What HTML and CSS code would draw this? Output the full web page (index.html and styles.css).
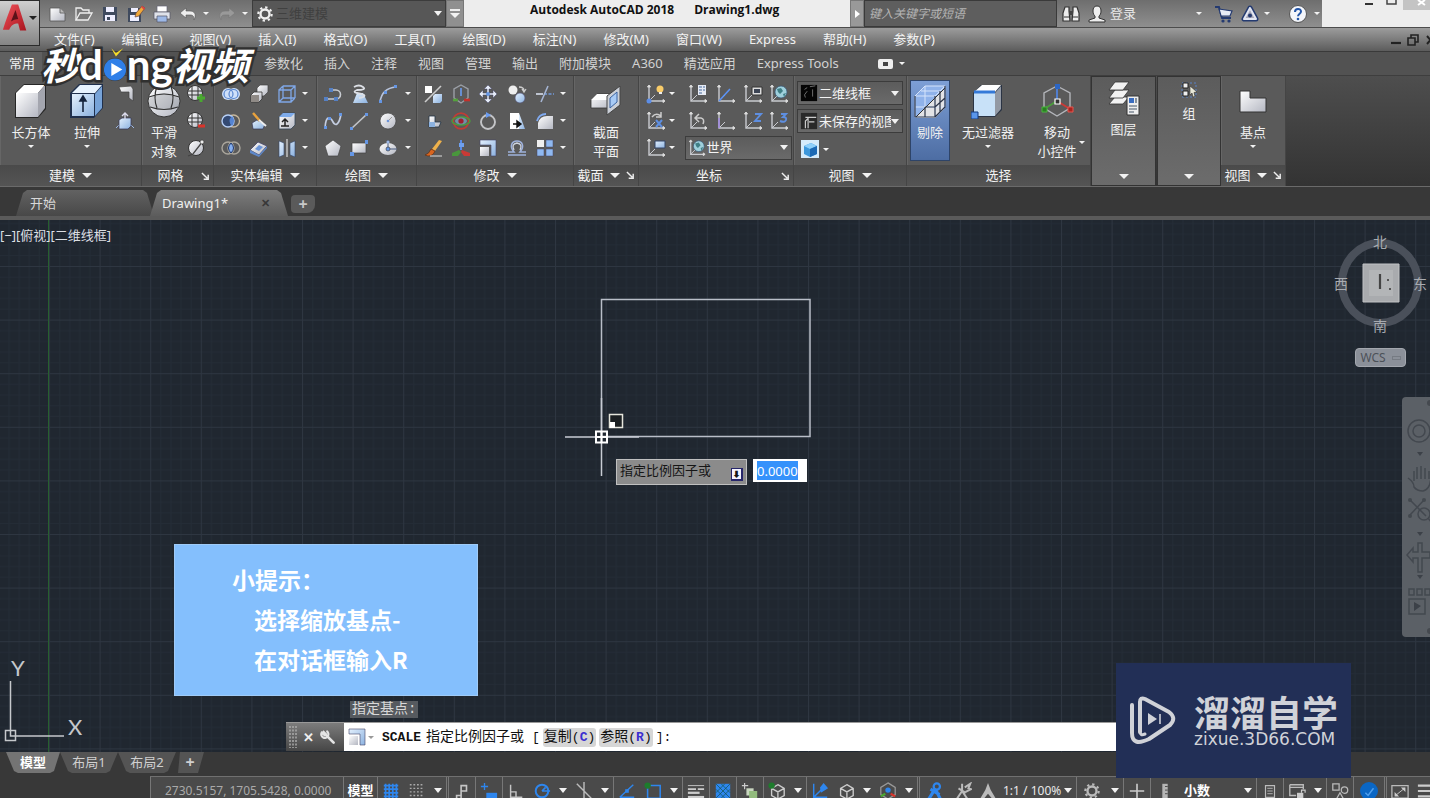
FILE: index.html
```html
<!DOCTYPE html>
<html lang="zh-CN">
<head>
<meta charset="utf-8">
<title>Autodesk AutoCAD 2018 - Drawing1.dwg</title>
<link rel="stylesheet" href="styles.css">
</head>
<body>
<svg class="defs" aria-hidden="true">
<defs>
<linearGradient id="gw" x1="0" y1="0" x2="1" y2="1"><stop offset="0" stop-color="#fff"/><stop offset="1" stop-color="#b4b7c2"/></linearGradient>
<linearGradient id="gb" x1="0" y1="0" x2="1" y2="1"><stop offset="0" stop-color="#e3f0fd"/><stop offset="1" stop-color="#8cb2e0"/></linearGradient>
<linearGradient id="gr" x1="0" y1="0" x2="1" y2="1"><stop offset="0" stop-color="#f0525a"/><stop offset="1" stop-color="#a8141e"/></linearGradient>
</defs>
<symbol id="new" viewBox="0 0 20 20"><path d="M2 4h10l5 5v8H2z" fill="url(#gw)" stroke="#555" stroke-width=".8"/><path d="M12 4v5h5" fill="#bbb" stroke="#555" stroke-width=".8"/></symbol>
<symbol id="open" viewBox="0 0 20 20"><path d="M2 16V4h5l2 2h6v3" fill="#777" stroke="#eee" stroke-width="1.3"/><path d="M2 16l4-7h12l-4 7z" fill="#777" stroke="#eee" stroke-width="1.3"/></symbol>
<symbol id="save" viewBox="0 0 20 20"><path d="M3 3h14v14H3z" fill="#3f4a5e"/><path d="M6 3h8v5H6zM5 11h10v6H5z" fill="#eef"/><path d="M7 13h3v3H7z" fill="#3f4a5e"/></symbol>
<symbol id="saveas" viewBox="0 0 20 20"><path d="M2 4h13v14H2z" fill="#3f4a5e"/><path d="M5 4h7v4H5zM4 11h9v6H4z" fill="#eef"/><path d="M9 13l1-4 6-7 3 2-6 8z" fill="#f0a838" stroke="#644" stroke-width=".7"/><path d="M15 3l1-1 3 2-1 2z" fill="#d44"/></symbol>
<symbol id="print" viewBox="0 0 20 20"><path d="M5 2h10v6H5z" fill="#fff" stroke="#667" stroke-width=".7"/><path d="M2 8h16v7H2z" fill="#dfe2ea" stroke="#556" stroke-width=".7"/><path d="M5 12h10v6H5z" fill="#9db8e6" stroke="#556" stroke-width=".7"/></symbol>
<symbol id="undo" viewBox="0 0 20 20"><path d="M8 4L2 9l6 5v-3h4c3 0 4 1 4 5 3-6 0-9-4-9H8z" fill="#eee" stroke="#555" stroke-width=".6"/></symbol>
<symbol id="redo" viewBox="0 0 20 20"><path d="M12 4l6 5-6 5v-3H8c-3 0-4 1-4 5-3-6 0-9 4-9h4z" fill="#999" stroke="#777" stroke-width=".6"/></symbol>
<symbol id="gear" viewBox="0 0 20 20"><circle cx="10" cy="10" r="5" fill="none" stroke="currentColor" stroke-width="2.6"/><circle cx="10" cy="10" r="7.4" fill="none" stroke="currentColor" stroke-width="2.4" stroke-dasharray="2.6 3.2"/></symbol>
<symbol id="bino" viewBox="0 0 20 20"><path d="M4 3h4v4l1 10H2V9zM12 3h4l2 6v8h-7l1-10z" fill="#eee" stroke="#333" stroke-width="1.2"/><path d="M8 7h4v4H8z" fill="#444"/><path d="M3 13h5M12 13h5" stroke="#333"/></symbol>
<symbol id="user" viewBox="0 0 20 20"><path d="M10 2c3 0 4 2 4 5s-1 4-2 5v2l6 2v2H2v-2l6-2v-2C7 11 6 10 6 7s1-5 4-5z" fill="#eee" stroke="#333"/></symbol>
<symbol id="cart" viewBox="0 0 20 20"><path d="M1 3h4l3 11h9" fill="none" stroke="#243a70" stroke-width="1.8"/><path d="M5 5l13 2-2 5H7z" fill="#e8ecf6" stroke="#243a70" stroke-width="1.2"/><circle cx="9" cy="17" r="1.6" fill="#243a70"/><circle cx="15" cy="17" r="1.6" fill="#243a70"/></symbol>
<symbol id="a360" viewBox="0 0 20 20"><path d="M10 4L4 15h12z" fill="none" stroke="#243a70" stroke-width="5" stroke-linejoin="round"/><path d="M10 4L4 15h12z" fill="#aab" stroke="#e2e6f2" stroke-width="2" stroke-linejoin="round"/><circle cx="10" cy="11.500" r="2" fill="#243a70"/></symbol>
<symbol id="help" viewBox="0 0 20 20"><circle cx="10" cy="10" r="8.5" fill="#f4f6fb" stroke="#555"/><path d="M7 8c0-4 6-4 6-.5 0 2.200-3 2.200-3 4.800" fill="none" stroke="#2456a8" stroke-width="2"/><circle cx="10" cy="15" r="1.3" fill="#2456a8"/></symbol>
<symbol id="cubew" viewBox="0 0 34 36"><path d="M1 10L10 1h22v25l-8 9H1z" fill="#262626"/><path d="M2 10h22v24H2z" fill="url(#gw)"/><path d="M2 10l8-8h21l-7 8z" fill="#fff"/><path d="M24 10l7-8v23l-7 9z" fill="#a4a6af"/></symbol>
<symbol id="extr" viewBox="0 0 34 36"><path d="M0 10L9 1h24v24l-9 10H0z" fill="#20304d"/><path d="M2 11h22v22H2z" fill="url(#gb)"/><path d="M2 10l8-8h22l-7 8z" fill="#e8f3fe"/><path d="M25 11l7-8v22l-7 8z" fill="#77a3d8"/><path d="M13 29V16M10 18l3-5 3 5z" stroke="#16243c" stroke-width="1.600" fill="#16243c"/></symbol>
<symbol id="poly3" viewBox="0 0 20 20"><path d="M4 3l12-1 2 3v12l-4-3V8H6z" fill="url(#gw)" stroke="#444" stroke-width=".7"/></symbol>
<symbol id="press" viewBox="0 0 20 20"><path d="M1 17l3-3h12l3 3" fill="none" stroke="#9db8e6"/><path d="M4 9l3-2h9v8l-3 3H4z" fill="url(#gb)" stroke="#335" stroke-width=".7"/><path d="M10 8V2M7 5l3-3 3 3" fill="none" stroke="#dde" stroke-width="1.3"/></symbol>
<symbol id="sphere" viewBox="0 0 34 36"><circle cx="17" cy="18" r="16" fill="url(#gw)" stroke="#333"/><path d="M2 16q15-12 30 0v8q-15 6-30 0z" fill="#5b5d63" opacity=".2"/><path d="M2 14q15-6 30 0M3 24q14 5 28 0M10 3q-4 12 0 22M24 3q4 12 0 22" fill="none" stroke="#333" stroke-width="1.2"/></symbol>
<symbol id="meshp" viewBox="0 0 20 20"><circle cx="9" cy="9" r="7.500" fill="url(#gw)" stroke="#333"/><path d="M2 7h14M2 11h14M6 2v14M12 2v14" stroke="#333"/><path d="M15 10v8M11 14h8" stroke="#49a830" stroke-width="3"/></symbol>
<symbol id="meshm" viewBox="0 0 20 20"><circle cx="9" cy="9" r="7.500" fill="url(#gw)" stroke="#333"/><path d="M2 7h14M2 11h14M6 2v14M12 2v14" stroke="#333"/><path d="M12 15h7" stroke="#d9342b" stroke-width="3"/></symbol>
<symbol id="meshr" viewBox="0 0 20 20"><circle cx="10" cy="10" r="7.500" fill="url(#gw)" stroke="#333"/><path d="M2 18l5-2 10-13" fill="none" stroke="#444" stroke-width="1.300"/><circle cx="16" cy="4" r="2" fill="#eee" stroke="#333" stroke-width=".6"/></symbol>
<symbol id="union" viewBox="0 0 20 20"><circle cx="7" cy="10" r="6" fill="#cfe0fa"/><circle cx="13" cy="10" r="6" fill="#cfe0fa"/><circle cx="7.500" cy="10" r="4.500" fill="none" stroke="#5684cf" stroke-width="1.200"/><circle cx="12.500" cy="10" r="4.500" fill="none" stroke="#5684cf" stroke-width="1.200"/></symbol>
<symbol id="subt" viewBox="0 0 20 20"><circle cx="12.500" cy="10" r="6" fill="none" stroke="#c7b89d" stroke-width="1.300"/><circle cx="7" cy="10" r="6" fill="#344a73" stroke="#b7d0f8" stroke-width="1.400"/><path d="M11 5q-5 5 0 10 4-5 0-10" fill="#5584d2"/></symbol>
<symbol id="inter" viewBox="0 0 20 20"><circle cx="7" cy="10" r="6" fill="none" stroke="#aaa69d" stroke-width="1.400"/><circle cx="13" cy="10" r="6" fill="none" stroke="#aaa69d" stroke-width="1.400"/><path d="M10 5q-5 5 0 10 5-5 0-10" fill="#86b0f0" stroke="#1d376e"/></symbol>
<symbol id="ext2" viewBox="0 0 20 20"><path d="M8 4l3-3h8v7l-4 4H8z" fill="url(#gw)" stroke="#444" stroke-width=".7"/><path d="M2 11l3-3h8v7l-3 3H2z" fill="url(#gw)" stroke="#333" stroke-width=".8"/><path d="M2 11h8v7H2z" fill="#8f8a86"/></symbol>
<symbol id="slice" viewBox="0 0 20 20"><path d="M3 12l5-3 8 4-2 5H4z" fill="url(#gb)" stroke="#335" stroke-width=".7"/><path d="M4 2l7 8" stroke="#e9a23d" stroke-width="2.400"/><path d="M10 9l7 6" stroke="#eee" stroke-width="2"/></symbol>
<symbol id="thick" viewBox="0 0 20 20"><path d="M1 12l8-8 9 4-8 9z" fill="url(#gw)" stroke="#446" stroke-width=".8"/><path d="M1 12v3l9 4 8-9V8l-8 9z" fill="#5e88ca"/><path d="M6 11l4-4 4 2-4 4z" fill="#6b95d8"/></symbol>
<symbol id="wcube" viewBox="0 0 20 20"><path d="M2 6h12v12H2zM6 2h12v12M2 6l4-4M14 6l4-4M14 18l4-4M6 2v12h12M2 18l4-4" fill="none" stroke="#7fa7e6" stroke-width="1.300"/></symbol>
<symbol id="cface" viewBox="0 0 20 20"><path d="M2 6l4-4h12v12l-4 4H2z" fill="url(#gw)" stroke="#345" stroke-width=".8"/><path d="M2 6l4-4h12l-4 4z" fill="#7eabea"/><path d="M8 15V9M5 11l3-3 3 3M4 15h8" stroke="#222" fill="none" stroke-width="1.500"/></symbol>
<symbol id="sepa" viewBox="0 0 20 20"><path d="M2 3l5 2v12l-5 2zM13 5l5-2v16l-5-2z" fill="url(#gb)" stroke="#346" stroke-width=".6"/><path d="M10 1v18" stroke="#ddd" stroke-width="1.200"/></symbol>
<symbol id="pline" viewBox="0 0 20 20"><path d="M2 15h11a4.500 4.500 0 000-9H8" fill="none" stroke="#c9ccd2" stroke-width="1.600"/><path d="M1 13h4v4H1zM11 13h4v4h-4zM6 4h4v4H6z" fill="#5580c4"/></symbol>
<symbol id="helix" viewBox="0 0 20 20"><path d="M4 19l4-10h6l5 10z" fill="url(#gb)"/><path d="M5 3q5-3 9 0t-6 3q-5 2 0 3t7 2q2 2-5 3" fill="none" stroke="#dcdfe5" stroke-width="1.800"/></symbol>
<symbol id="arc" viewBox="0 0 20 20"><path d="M2 18Q4 4 18 3" fill="none" stroke="#b8c4dc" stroke-width="1.700"/><path d="M1 16h3v3H1zM6 7h3v3H6zM16 1h3v3h-3z" fill="#6596e4"/></symbol>
<symbol id="spline" viewBox="0 0 20 20"><path d="M2 17C3 2 8 7 10 11s6 4 8-8" fill="none" stroke="#c4cde0" stroke-width="1.700"/><path d="M1 15h3v3H1zM5 6h3v3H5zM16 2h3v3h-3z" fill="#6596e4"/></symbol>
<symbol id="line" viewBox="0 0 20 20"><path d="M2 18L18 3" stroke="#c2c4c8" stroke-width="1.700"/><path d="M1 16h3v3H1zM16 2h3v3h-3z" fill="#6596e4"/></symbol>
<symbol id="circ" viewBox="0 0 20 20"><circle cx="10" cy="10" r="8" fill="url(#gw)" stroke="#444" stroke-width=".7"/><path d="M10 10l4-4" stroke="#999"/><circle cx="10" cy="10" r="1.300" fill="#6d94d8"/></symbol>
<symbol id="penta" viewBox="0 0 20 20"><path d="M10 2l8 6-3 10H5L2 8z" fill="url(#gw)" stroke="#444" stroke-width=".7"/></symbol>
<symbol id="rect" viewBox="0 0 20 20"><path d="M3 5h14v10H3z" fill="url(#gw)" stroke="#444" stroke-width=".7"/><path d="M1 14h4v4H1zM16 2h3v4h-3z" fill="#6596e4"/></symbol>
<symbol id="ellip" viewBox="0 0 20 20"><ellipse cx="10" cy="11" rx="8.500" ry="6" fill="url(#gw)"/><path d="M10 2v9h9" fill="none" stroke="#46597d"/><circle cx="10" cy="11" r="2" fill="#6596e4" stroke="#333" stroke-width=".6"/><circle cx="10" cy="4" r="1.600" fill="#9db8e6"/></symbol>
<symbol id="explode" viewBox="0 0 20 20"><path d="M2 18L18 2" stroke="#ccc" stroke-width="1.600"/><path d="M2 2h7v7H2z" fill="#fff"/><path d="M10 12l2-2h7v7l-2 2h-7z" fill="url(#gb)"/></symbol>
<symbol id="giz1" viewBox="0 0 20 20"><path d="M10 1l7 4v9l-7 5-7-5V5z" fill="none" stroke="#9b9fa6" stroke-width="1.400"/><path d="M10 12V4" stroke="#6b9cf0" stroke-width="1.600"/><path d="M2 16h5" stroke="#55a23d" stroke-width="2.600"/><path d="M13 16h6" stroke="#c5302b" stroke-width="2.600"/></symbol>
<symbol id="move" viewBox="0 0 20 20"><path d="M10 1l4 4h-3v4h4V6l4 4-4 4v-3h-4v4h3l-4 4-4-4h3v-4H5v3l-4-4 4-4v3h4V5H6z" fill="#e6ecf8" stroke="#446" stroke-width=".5"/><circle cx="10" cy="10" r="2" fill="#6596e4"/></symbol>
<symbol id="copy" viewBox="0 0 20 20"><circle cx="6" cy="6" r="4.500" fill="#eee"/><circle cx="13" cy="14" r="5" fill="url(#gb)" stroke="#557" stroke-width=".7"/><path d="M12 3q5 0 5 4M15 5l2 3 2-3" fill="none" stroke="#ccc" stroke-width="1.300"/></symbol>
<symbol id="trim" viewBox="0 0 20 20"><path d="M1 10h7" stroke="#cfd6e4" stroke-width="1.700"/><path d="M9 10h10" stroke="#7299d8" stroke-width="1.600" stroke-dasharray="3 1.500"/><path d="M6 18L13 2" stroke="#a7b7d6" stroke-width="1.500"/></symbol>
<symbol id="lshape" viewBox="0 0 20 20"><path d="M6 5h6v6h6l-2 5H6z" fill="url(#gw)" stroke="#234" stroke-width=".8"/><path d="M6 11h6v5H6z" fill="#8cb2e0"/></symbol>
<symbol id="giz2" viewBox="0 0 20 20"><circle cx="10" cy="10" r="7.800" fill="none" stroke="#c13c35" stroke-width="1.800"/><ellipse cx="10" cy="10" rx="9" ry="4" fill="none" stroke="#4b9b3d" stroke-width="1.500"/><ellipse cx="10" cy="10" rx="6" ry="3.500" fill="#7fb5d8" opacity=".6"/><circle cx="10" cy="10" r="2.600" fill="#a01f30"/></symbol>
<symbol id="rot" viewBox="0 0 20 20"><circle cx="10" cy="11" r="7" fill="none" stroke="#c4c5c8" stroke-width="1.900"/><path d="M8 1l5 3-5 3z" fill="#6b9cf0"/></symbol>
<symbol id="mirror" viewBox="0 0 20 20"><path d="M3 2h9v16H3z" fill="#fff"/><path d="M12 2l6 16h-6z" fill="url(#gb)"/><path d="M6 13h7M10 10l4 3-4 3z" stroke="#111" stroke-width="1.400" fill="#111"/></symbol>
<symbol id="fillet" viewBox="0 0 20 20"><path d="M3 18v-6q2-7 9-7h6v13z" fill="url(#gw)"/><path d="M2 10Q4 3 11 3" fill="none" stroke="#80aaf0" stroke-width="1.800"/></symbol>
<symbol id="brush" viewBox="0 0 20 20"><path d="M9 11L16 2l3 1-7 10z" fill="#eeb14b"/><path d="M2 17q4-1 6-6l4 2q-2 5-7 5z" fill="#d8651f" stroke="#5a2a10" stroke-width=".6"/><path d="M7 18h12" stroke="#ddd"/></symbol>
<symbol id="giz3" viewBox="0 0 20 20"><path d="M9 12V2h2v10z" fill="#5b8de8"/><path d="M8 5h5v4H8z" fill="#6fa0ee"/><path d="M8 12l-7 3v3h6l3-4z" fill="#49963c"/><path d="M11 12l8 3v3h-6l-3-4z" fill="#c93a36"/></symbol>
<symbol id="scale" viewBox="0 0 20 20"><path d="M2 2h16v16h-5V7H2z" fill="url(#gb)" stroke="#446" stroke-width=".6"/><path d="M2 9h9v9H2z" fill="url(#gw)"/></symbol>
<symbol id="offset" viewBox="0 0 20 20"><path d="M1 17h18M1 14h6c-5-6-2-11 3-11s8 5 3 11h6" fill="none" stroke="#9fb2dc" stroke-width="1.600"/><path d="M7 12q-3-6 3-7 6 1 3 7" fill="none" stroke="#d0d5df" stroke-width="1.300"/></symbol>
<symbol id="array" viewBox="0 0 20 20"><path d="M2 2h7v7H2z" fill="#eee"/><path d="M11 2h7v7h-7zM2 11h7v7H2zM11 11h7v7h-7z" fill="#8fb8f0" stroke="#446" stroke-width=".5"/></symbol>
<symbol id="section" viewBox="0 0 34 36"><path d="M2 17l6-6h15v14H2z" fill="url(#gw)" stroke="#333" stroke-width=".8"/><path d="M2 17l6-6h15l-5 6z" fill="#fff"/><path d="M18 13L31 3v19L18 32z" fill="#cbd0d8" stroke="#444"/><path d="M21 15l7-6v10l-7 6z" fill="#a8cbf6" stroke="#3b63a0"/></symbol>
<symbol id="ax" viewBox="0 0 20 20"><path d="M3 2v15h15" fill="none" stroke="#c9cbd0" stroke-width="1.400"/><path d="M3 17l6-6" stroke="#c9cbd0"/><path d="M1.500 3L3 1l1.500 2zM17 15.500L19 17l-2 1.500z" fill="#ddd" stroke="#ddd"/></symbol>
<symbol id="ucs1" viewBox="0 0 20 20"><use href="#ax"/><circle cx="14" cy="5" r="3.500" fill="#f9cc69"/><path d="M13 8h3v2h-3z" fill="#eee"/><circle cx="3" cy="17" r="2.500" fill="#5c8ee8"/></symbol>
<symbol id="ucs2" viewBox="0 0 20 20"><use href="#ax"/><path d="M10 1h8v10h-8z" fill="#e6ebf5"/><path d="M11 3h3M11 6h3M11 9h3M15 3h2M15 6h2" stroke="#466a9c" stroke-width="1.200"/></symbol>
<symbol id="ucs3" viewBox="0 0 20 20"><use href="#ax"/><path d="M3 17L14 5" stroke="#5b92f4" stroke-width="1.600"/></symbol>
<symbol id="ucs4" viewBox="0 0 20 20"><use href="#ax"/><path d="M9 3h10v8H9z" fill="#ddd" stroke="#333"/><path d="M11 5h6v4h-6z" fill="#3c4454"/></symbol>
<symbol id="ucs5" viewBox="0 0 20 20"><use href="#ax"/><circle cx="12" cy="8" r="6" fill="#9fd0dc" stroke="#357" stroke-width=".7"/><path d="M8 5l4-1 2 3-3 3-2-2zM14 10l3-1-2 4z" fill="#3f7f86"/></symbol>
<symbol id="ucs6" viewBox="0 0 20 20"><use href="#ax"/><path d="M6 6q4-5 9-1M15 1v5h-5" fill="none" stroke="#ccc" stroke-width="1.500"/><path d="M10 9l6 7M16 9l-6 7" stroke="#5e8ee0" stroke-width="2"/></symbol>
<symbol id="ucs7" viewBox="0 0 20 20"><use href="#ax"/><path d="M8 7h5q4 1 2 6M11 3L7 7l4 4" fill="none" stroke="#ccc" stroke-width="1.500"/></symbol>
<symbol id="ucs8" viewBox="0 0 20 20"><use href="#ax"/><path d="M3 17V7" stroke="#a08ae0" stroke-width="1.600"/></symbol>
<symbol id="ucs9" viewBox="0 0 20 20"><use href="#ax"/><path d="M12 3h6l-6 7h6" fill="none" stroke="#5e8ee0" stroke-width="1.900"/></symbol>
<symbol id="ucs10" viewBox="0 0 20 20"><use href="#ax"/><path d="M12 3h5l-3 3q4 0 3 3t-6 1" fill="none" stroke="#5e8ee0" stroke-width="1.900"/></symbol>
<symbol id="ucs11" viewBox="0 0 20 20"><use href="#ax"/><path d="M9 3h10v7H9z" fill="url(#gb)" stroke="#346"/></symbol>
<symbol id="vs1" viewBox="0 0 20 20"><path d="M1 1h18v18H1z" fill="#050505"/><path d="M5 6l3-2M11 3l6-1M8 8l-3 4 1 3M14 6v8" stroke="#777" fill="none"/></symbol>
<symbol id="vs2" viewBox="0 0 20 20"><path d="M1 1h18v18H1z" fill="#292929"/><path d="M6 18V10l3-3M9 18V6h9M10 11h6M6 6h4" stroke="#ccc" fill="none" stroke-width="1.300"/></symbol>
<symbol id="vcube" viewBox="0 0 20 20"><path d="M1 1h18v18H1z" fill="#d6ebfa"/><path d="M4 7l7-3 6 3v8l-7 3-6-3z" fill="#3d98dc"/><path d="M4 7l7-3 6 3-7 3z" fill="#8fd0fa"/><path d="M10 10l7-3v8l-7 3z" fill="#1c69b4"/></symbol>
<symbol id="cull" viewBox="0 0 34 36"><path d="M2 14L12 3h20v22l-10 10H2z" fill="#8fb2ea"/><path d="M4 33L31 6v20l-9 9H4z" fill="#e2e3e6"/><path d="M2 13h20v21H2zM12 3h20v21M2 13L12 3M22 13l10-10M22 34l10-10M12 3v21h20M2 24h20M8 8h20" fill="none" stroke="#d6e4fb" stroke-width="1"/><path d="M12 24v10M22 13v21h-20M2 34V13M22 24l10-9M27 8v21M32 3v21L22 34M12 24h10" fill="none" stroke="#2b3448" stroke-width="1.200"/><path d="M3 34L32 5" stroke="#333"/></symbol>
<symbol id="nofil" viewBox="0 0 34 36"><path d="M2 10l8-8h21v25l-7 7H2z" fill="#2b3444"/><path d="M3 10h21v23H3z" fill="#c8e1f8"/><path d="M3 9l8-7h19l-6 7z" fill="#fff"/><path d="M24 10l6-7v23l-6 7z" fill="#9399a4"/><path d="M3 9h21" stroke="#3479d8" stroke-width="3"/><path d="M0 29h7v7H0z" fill="#5a96ea" stroke="#123a80"/></symbol>
<symbol id="gizb" viewBox="0 0 34 36"><path d="M17 3l13 7v15l-13 8-13-8V10z" fill="none" stroke="#b3b5ba" stroke-width="1.400"/><path d="M17 18V4" stroke="#4f88ee" stroke-width="1.600"/><path d="M17 18L4 26" stroke="#4b9b3d" stroke-width="2"/><path d="M17 18l13 8" stroke="#c93a36" stroke-width="2"/><path d="M15 1h5v5h-5z" fill="#2c66c4"/><path d="M2 24h5v5H2z" fill="#2a7f22" stroke="#49b53c"/><path d="M28 24h5v5h-5z" fill="#a8241f" stroke="#e4574e"/><path d="M15 16h5v5h-5z" fill="#333" stroke="#fff" stroke-width="1.200"/></symbol>
<symbol id="layers" viewBox="0 0 34 36"><g fill="#f2f2f2" stroke="#333" stroke-width=".8"><path d="M2 24l6-7h14l-6 7z"/><path d="M2 18l6-8h14l-6 8z"/><path d="M2 10l6-8h14l-6 8z"/></g><path d="M20 16h12v19H20z" fill="#eee" stroke="#333"/><path d="M22 18h5v5h-5z" fill="#3a6dc0"/><path d="M29 18v5M22 26h8M22 29h8M22 32h5" stroke="#456" stroke-width="1.200"/></symbol>
<symbol id="group" viewBox="0 0 20 20"><path d="M3 3h14v14H3z" fill="none" stroke="#5a83c8" stroke-dasharray="2 2"/><path d="M4 3h5v5H4zM4 11h5v5H4z" fill="#eee" stroke="#222"/><path d="M11 6l7 6-3 .5 1 4-2 .5-1-4-2 2z" fill="#e8e8d8" stroke="#333" stroke-width=".6"/></symbol>
<symbol id="base" viewBox="0 0 34 36"><path d="M4 8h10v7h16v14H4z" fill="url(#gw)" stroke="#333"/></symbol>
<symbol id="wrench" viewBox="0 0 20 20"><path d="M7 7l10 10" stroke="#e4e4e4" stroke-width="3.400" stroke-linecap="round"/><path d="M3.500 2.500L7 6 5.500 7.500 2 4.500a4.500 4.500 0 106-2" fill="none" stroke="#e4e4e4" stroke-width="2.600"/></symbol>
<symbol id="launch" viewBox="0 0 10 10"><path d="M1 1l6 6M8 3v5H3" fill="none" stroke="#eee" stroke-width="1.600"/></symbol>
<symbol id="sgrid" viewBox="0 0 20 20"><path d="M2 4h16M2 8h16M2 12h16M2 16h16M4 2v16M8 2v16M12 2v16M16 2v16" stroke="#2e86ee" stroke-width="1.900"/></symbol>
<symbol id="sdots" viewBox="0 0 20 20"><path d="M2 3h16M2 7h16M2 11h16M2 15h16" stroke="#aaa" stroke-width="1.500" stroke-dasharray="2 2"/></symbol>
<symbol id="sinfer" viewBox="0 0 20 20"><path d="M9 18V4h6v6H9M4 15h5v5H4z" fill="none" stroke="#c5c5c5" stroke-width="1.800"/></symbol>
<symbol id="sdyn" viewBox="0 0 20 20"><path d="M5 1v8M1 5h8" stroke="#2e86ee" stroke-width="1.500"/><path d="M7 12h12v6H7z" fill="#2e86ee"/></symbol>
<symbol id="sortho" viewBox="0 0 20 20"><path d="M4 3v14h13M4 11h6v6" fill="none" stroke="#c5c5c5" stroke-width="1.600"/></symbol>
<symbol id="spolar" viewBox="0 0 20 20"><circle cx="10" cy="10" r="7" fill="none" stroke="#2e86ee" stroke-width="2.200"/><path d="M10 10l4-4M10 10h9" stroke="#2e86ee" stroke-width="1.900"/></symbol>
<symbol id="siso" viewBox="0 0 20 20"><path d="M2 2l16 16M10 0v20" stroke="#bbb" stroke-width="1.600"/></symbol>
<symbol id="strack" viewBox="0 0 20 20"><path d="M2 17L17 3M2 17h16" stroke="#2e86ee" stroke-width="1.600"/><path d="M8 8h4v4H8z" fill="#2e86ee"/></symbol>
<symbol id="sosnap" viewBox="0 0 20 20"><path d="M4 4h14v14H4z" fill="none" stroke="#2e86ee" stroke-width="1.700"/><circle cx="4" cy="4" r="3.500" fill="#1d7c2c"/></symbol>
<symbol id="slw" viewBox="0 0 20 20"><path d="M1 4h18" stroke="#ccc"/><path d="M1 8h9M12 8h7" stroke="#ccc" stroke-width="2"/><path d="M1 12h13" stroke="#ccc" stroke-width="2.500"/><path d="M1 17h18" stroke="#ccc" stroke-width="3"/></symbol>
<symbol id="strans" viewBox="0 0 20 20"><path d="M2 2h16v16H2z" fill="#2e86ee"/><path d="M2 2l16 16M2 8l10 10M8 2l10 10M18 2L2 18M12 2L2 12M18 8L8 18" stroke="#155" stroke-width=".8"/></symbol>
<symbol id="scyc" viewBox="0 0 20 20"><path d="M4 1v7M1 4h7" stroke="#ccc" stroke-width="1.300"/><path d="M6 7h8v8H6z" fill="#c9d6c0"/><path d="M9 10h9v10H9z" fill="#92bb7d"/></symbol>
<symbol id="s3d" viewBox="0 0 20 20"><path d="M11 3l7 4v8l-7 4-7-4V7zM4 7l7 4 7-4M11 11v8" fill="none" stroke="#ccc" stroke-width="1.500"/></symbol>
<symbol id="s3dg" viewBox="0 0 20 20"><use href="#s3d"/><circle cx="4" cy="4" r="3.500" fill="#1d7c2c"/></symbol>
<symbol id="sducs" viewBox="0 0 20 20"><path d="M3 2v15h15M3 17L14 6" fill="none" stroke="#2e86ee" stroke-width="1.600"/><path d="M14 1l5 6-8 5-1-6z" fill="#2e86ee"/></symbol>
<symbol id="sgiz" viewBox="0 0 20 20"><path d="M10 1l8 5v8l-8 5-8-5V6z" fill="none" stroke="#999" stroke-width="1.400"/><circle cx="10" cy="9" r="3" fill="#2e86ee"/><path d="M7 13l-5 3" stroke="#49a830" stroke-width="2.400"/><path d="M13 13l5 3" stroke="#d9342b" stroke-width="2.400"/></symbol>
<symbol id="sann1" viewBox="0 0 20 20"><circle cx="12" cy="5" r="3.500" fill="none" stroke="#2e86ee" stroke-width="2.500"/><path d="M10 8L3 19M11 9l5 10M5 8l10 6" stroke="#2e86ee" stroke-width="3.500"/></symbol>
<symbol id="sann2" viewBox="0 0 20 20"><path d="M9 2v8l-6 9M9 10l6 9M5 7l8 5M12 6l6-4-2 5 3 1-6 3" fill="none" stroke="#bbb" stroke-width="2.200"/></symbol>
<symbol id="sann3" viewBox="0 0 20 20"><path d="M10 1l3 8 6 10h-4l-5-6-5 6H1L7 9z" fill="#bbb"/></symbol>
<symbol id="splus" viewBox="0 0 20 20"><path d="M10 2v16M2 10h16" stroke="#ccc" stroke-width="1.800"/></symbol>
<symbol id="sunit" viewBox="0 0 20 20"><path d="M7 2h6v18H7z" fill="#b5b5b5"/><path d="M10 5h3M10 9h3M10 13h3" stroke="#444"/></symbol>
<symbol id="squick" viewBox="0 0 20 20"><path d="M5 4h10v13H5z" fill="none" stroke="#bbb" stroke-width="1.300"/><path d="M7 7h6M7 10h6M7 13h6" stroke="#bbb"/></symbol>
<symbol id="slock" viewBox="0 0 20 20"><path d="M2 3h15v5M2 3v12h7M2 6h15" fill="none" stroke="#bbb" stroke-width="1.500"/><path d="M10 12h7v7h-7z" fill="#ccc"/><path d="M15 12V9h4v3" fill="none" stroke="#ccc" stroke-width="1.300"/></symbol>
<symbol id="siso2" viewBox="0 0 20 20"><path d="M2 2h7v7H2zM10 12l4 7H6z" fill="none" stroke="#bbb" stroke-width="1.400"/><circle cx="15" cy="9" r="3.600" fill="none" stroke="#bbb" stroke-width="1.400"/></symbol>
<symbol id="shw" viewBox="0 0 20 20"><circle cx="10" cy="10" r="10" fill="#0a66c4"/><path d="M6 12l3 3 6-8" fill="none" stroke="#4f9fee" stroke-width="1.600"/></symbol>
<symbol id="sclean" viewBox="0 0 20 20"><path d="M1 4h18v14H1z" fill="none" stroke="#bbb" stroke-width="1.400"/><path d="M11 6h5v5zM4 16v-5l5 5z" fill="#ccc"/><path d="M5 15L15 7" stroke="#ccc"/></symbol>
<symbol id="smenu" viewBox="0 0 20 20"><path d="M1 4h18M1 10h18M1 16h18" stroke="#ccc" stroke-width="2.400"/></symbol>
</svg>

<header class="top">
  <button class="app" aria-label="应用程序菜单">
    <svg viewBox="0 0 30 34" width="27" height="32"><path d="M11 2h7l9 29h-7l-2-8c-5 0-8 2-10 7H1C4 20 8 10 11 2z" fill="url(#gr)"/><path d="M15 8l3 10q-5 0-8 3z" fill="#5b1219"/></svg>
    <i class="tri dark"></i>
  </button>
  <div class="titlebar">
    <div class="quick">
      <button aria-label="新建"><svg class="i"><use href="#new"/></svg></button>
      <button aria-label="打开"><svg class="i"><use href="#open"/></svg></button>
      <button aria-label="保存"><svg class="i"><use href="#save"/></svg></button>
      <button aria-label="另存为"><svg class="i"><use href="#saveas"/></svg></button>
      <button aria-label="打印"><svg class="i"><use href="#print"/></svg></button>
      <button aria-label="放弃"><svg class="i"><use href="#undo"/></svg><i class="tri s"></i></button>
      <button aria-label="重做"><svg class="i"><use href="#redo"/></svg><i class="tri s"></i></button>
    </div>
    <label class="workspace"><svg class="i"><use href="#gear"/></svg><select aria-label="工作空间"><option>三维建模</option></select><i class="tri"></i></label>
    <button class="qmore" aria-label="自定义"><b></b><i class="tri"></i></button>
    <h1 class="title"><span>Autodesk AutoCAD 2018</span><span>Drawing1.dwg</span></h1>
    <div class="info">
      <button class="sarrow" aria-label="展开"><i class="right"></i></button>
      <input class="search" type="text" placeholder="键入关键字或短语" aria-label="搜索">
      <button aria-label="查找"><svg class="i"><use href="#bino"/></svg></button>
      <button class="login"><svg class="i"><use href="#user"/></svg><span>登录</span><i class="tri s"></i></button>
      <button aria-label="商店"><svg class="i"><use href="#cart"/></svg></button>
      <button class="a360" aria-label="A360"><svg class="i"><use href="#a360"/></svg><i class="tri s"></i></button>
      <button class="hlp" aria-label="帮助"><svg class="i"><use href="#help"/></svg><i class="tri s"></i></button>
    </div>
    <div class="wctl">
      <svg viewBox="0 0 108 26"><path d="M43 4h8" stroke="#333" stroke-width="2"/><path d="M65 0v4h9V0" fill="none" stroke="#444" stroke-width="1.500"/><path d="M81 0h27v10H81z" fill="#c4c4c4"/><path d="M96 0l7 5M103 0l-7 5" stroke="#fff" stroke-width="2"/></svg>
    </div>
  </div>
  <nav class="menubar">
    <a href="#">文件(F)</a><a href="#">编辑(E)</a><a href="#">视图(V)</a><a href="#">插入(I)</a><a href="#">格式(O)</a><a href="#">工具(T)</a><a href="#">绘图(D)</a><a href="#">标注(N)</a><a href="#">修改(M)</a><a href="#">窗口(W)</a><a href="#">Express</a><a href="#">帮助(H)</a><a href="#">参数(P)</a>
    <svg class="mdi" viewBox="0 0 44 16"><path d="M5 11h10" stroke="#222" stroke-width="2.200"/><path d="M22 6h7v7h-7zM25 6V3h7v7h-3" fill="none" stroke="#222" stroke-width="1.600"/><path d="M41 4l7 8M48 4l-7 8" stroke="#222" stroke-width="2"/></svg>
  </nav>
</header>

<nav class="rtabs">
  <a class="on" href="#">常用</a>
  <div class="more"><a href="#">参数化</a><a href="#">插入</a><a href="#">注释</a><a href="#">视图</a><a href="#">管理</a><a href="#">输出</a><a href="#">附加模块</a><a href="#">A360</a><a href="#">精选应用</a><a href="#">Express Tools</a></div>
  <button class="rmin" aria-label="最小化功能区"><b></b><i class="tri s"></i></button>
</nav>

<main class="ribbon">
  <section class="panel p1">
    <div class="body">
      <button class="big"><svg><use href="#cubew"/></svg><span>长方体</span><i class="tri s"></i></button>
      <button class="big"><svg><use href="#extr"/></svg><span>拉伸</span><i class="tri s"></i></button>
      <div class="col"><button aria-label="多段体"><svg class="i"><use href="#poly3"/></svg></button><button aria-label="按住并拖动"><svg class="i"><use href="#press"/></svg></button></div>
    </div>
    <h2>建模<i class="tri"></i></h2>
  </section>
  <section class="panel p2">
    <div class="body">
      <button class="big"><svg><use href="#sphere"/></svg><span>平滑<br>对象</span></button>
      <div class="col"><button aria-label="提高平滑度"><svg class="i"><use href="#meshp"/></svg></button><button aria-label="降低平滑度"><svg class="i"><use href="#meshm"/></svg></button><button aria-label="优化网格"><svg class="i"><use href="#meshr"/></svg></button></div>
    </div>
    <h2>网格<svg class="la"><use href="#launch"/></svg></h2>
  </section>
  <section class="panel p3">
    <div class="body icons">
      <button aria-label="并集"><svg class="i"><use href="#union"/></svg></button><button aria-label="拉伸面"><svg class="i"><use href="#ext2"/></svg></button><button aria-label="提取边"><svg class="i"><use href="#wcube"/></svg></button><i class="tri s"></i>
      <button aria-label="差集"><svg class="i"><use href="#subt"/></svg></button><button aria-label="剖切"><svg class="i"><use href="#slice"/></svg></button><button aria-label="偏移面"><svg class="i"><use href="#cface"/></svg></button><i class="tri s"></i>
      <button aria-label="交集"><svg class="i"><use href="#inter"/></svg></button><button aria-label="加厚"><svg class="i"><use href="#thick"/></svg></button><button aria-label="分割"><svg class="i"><use href="#sepa"/></svg></button><i class="tri s"></i>
    </div>
    <h2>实体编辑<i class="tri"></i></h2>
  </section>
  <section class="panel p4">
    <div class="body icons">
      <button aria-label="多段线"><svg class="i"><use href="#pline"/></svg></button><button aria-label="螺旋"><svg class="i"><use href="#helix"/></svg></button><button aria-label="圆弧"><svg class="i"><use href="#arc"/></svg></button><i class="tri s"></i>
      <button aria-label="样条曲线"><svg class="i"><use href="#spline"/></svg></button><button aria-label="直线"><svg class="i"><use href="#line"/></svg></button><button aria-label="圆"><svg class="i"><use href="#circ"/></svg></button><i class="tri s"></i>
      <button aria-label="多边形"><svg class="i"><use href="#penta"/></svg></button><button aria-label="矩形"><svg class="i"><use href="#rect"/></svg></button><button aria-label="椭圆"><svg class="i"><use href="#ellip"/></svg></button><i class="tri s"></i>
    </div>
    <h2>绘图<i class="tri"></i></h2>
  </section>
  <section class="panel p5">
    <div class="body icons">
      <button aria-label="分解"><svg class="i"><use href="#explode"/></svg></button><button aria-label="三维移动"><svg class="i"><use href="#giz1"/></svg></button><button aria-label="移动"><svg class="i"><use href="#move"/></svg></button><button aria-label="复制"><svg class="i"><use href="#copy"/></svg></button><button aria-label="修剪"><svg class="i"><use href="#trim"/></svg></button><i class="tri s"></i>
      <button aria-label="对齐"><svg class="i"><use href="#lshape"/></svg></button><button aria-label="三维旋转"><svg class="i"><use href="#giz2"/></svg></button><button aria-label="旋转"><svg class="i"><use href="#rot"/></svg></button><button aria-label="镜像"><svg class="i"><use href="#mirror"/></svg></button><button aria-label="圆角"><svg class="i"><use href="#fillet"/></svg></button><i class="tri s"></i>
      <button aria-label="删除"><svg class="i"><use href="#brush"/></svg></button><button aria-label="三维缩放"><svg class="i"><use href="#giz3"/></svg></button><button aria-label="缩放"><svg class="i"><use href="#scale"/></svg></button><button aria-label="偏移"><svg class="i"><use href="#offset"/></svg></button><button aria-label="阵列"><svg class="i"><use href="#array"/></svg></button><i class="tri s"></i>
    </div>
    <h2>修改<i class="tri"></i></h2>
  </section>
  <section class="panel p6">
    <div class="body"><button class="big"><svg><use href="#section"/></svg><span>截面<br>平面</span></button></div>
    <h2>截面<i class="tri"></i><svg class="la"><use href="#launch"/></svg></h2>
  </section>
  <section class="panel p7">
    <div class="body icons">
      <button aria-label="UCS 图标"><svg class="i"><use href="#ucs1"/></svg></button><i class="tri s"></i><button class="c4" aria-label="UCS 设置"><svg class="i"><use href="#ucs2"/></svg></button><button aria-label="UCS"><svg class="i"><use href="#ucs3"/></svg></button><button aria-label="命名 UCS"><svg class="i"><use href="#ucs4"/></svg></button><button aria-label="世界 UCS"><svg class="i"><use href="#ucs5"/></svg></button>
      <button aria-label="绕 X 轴"><svg class="i"><use href="#ucs6"/></svg></button><i class="tri s"></i><button class="c4" aria-label="上一个 UCS"><svg class="i"><use href="#ucs7"/></svg></button><button aria-label="原点"><svg class="i"><use href="#ucs8"/></svg></button><button aria-label="Z 轴矢量"><svg class="i"><use href="#ucs9"/></svg></button><button aria-label="三点"><svg class="i"><use href="#ucs10"/></svg></button>
      <button aria-label="视图 UCS"><svg class="i"><use href="#ucs11"/></svg></button><i class="tri s"></i><label class="combo c4w"><svg class="i"><use href="#ucs5"/></svg><select aria-label="坐标系"><option>世界</option></select><i class="tri"></i></label>
    </div>
    <h2>坐标<svg class="la"><use href="#launch"/></svg></h2>
  </section>
  <section class="panel p8">
    <div class="body">
      <label class="combo"><svg class="i"><use href="#vs1"/></svg><select aria-label="视觉样式"><option>二维线框</option></select><i class="tri"></i></label>
      <label class="combo"><svg class="i"><use href="#vs2"/></svg><select aria-label="视图"><option>未保存的视图</option></select><i class="tri"></i></label>
      <button class="vc" aria-label="视口"><svg class="i"><use href="#vcube"/></svg><i class="tri s"></i></button>
    </div>
    <h2>视图<i class="tri"></i></h2>
  </section>
  <section class="panel p9">
    <div class="body">
      <button class="big sel"><svg><use href="#cull"/></svg><span>剔除</span></button>
      <button class="big"><svg><use href="#nofil"/></svg><span>无过滤器</span><i class="tri s"></i></button>
      <button class="big giz"><svg><use href="#gizb"/></svg><span>移动<br>小控件</span><i class="tri s"></i></button>
    </div>
    <h2>选择</h2>
  </section>
  <section class="panel raised p10"><button class="big"><svg><use href="#layers"/></svg><span>图层</span></button><i class="tri"></i></section>
  <section class="panel raised p11"><button class="big"><svg class="i"><use href="#group"/></svg><span>组</span></button><i class="tri"></i></section>
  <section class="panel p12">
    <div class="body"><button class="big"><svg><use href="#base"/></svg><span>基点</span><i class="tri s"></i></button></div>
    <h2>视图<i class="tri"></i><svg class="la"><use href="#launch"/></svg></h2>
  </section>
</main>

<nav class="ftabs">
  <a class="ftab" href="#">开始</a>
  <a class="ftab on" href="#">Drawing1*<b>✕</b></a>
  <button class="fplus" aria-label="新图形">+</button>
</nav>

<section class="canvas">
  <svg class="grid" width="100%" height="100%">
    <defs><pattern id="pg" x="245" y="230" width="253" height="268" patternUnits="userSpaceOnUse" patternTransform="scale(.2)">
      <path d="M53 0v268M104 0v268M154 0v268M205 0v268M0 56h253M0 109h253M0 163h253M0 216h253" stroke="#242c36" stroke-width="5"/>
      <path d="M2 0v268M0 2h253" stroke="#2e3641" stroke-width="6"/></pattern></defs>
    <rect width="100%" height="100%" fill="url(#pg)"/>
    <rect x="48" width="1" height="100%" fill="#27602f"/>
    <path d="M601.500 79.500H810V216.500H601.500z" fill="none" stroke="#b9bec8" stroke-width="1.500"/>
    <path d="M565 217h74M601.500 178v78" stroke="#c8ccd4" stroke-width="1.500"/>
    <path d="M596 211.500h11v11h-11zM601.500 211v12M596 217h12" fill="none" stroke="#fff" stroke-width="2"/>
    <rect x="609.500" y="194.500" width="13" height="13" fill="#1b1f22" stroke="#e5e5dc" stroke-width="1.500"/><rect x="610" y="202" width="5" height="6" fill="#fff"/>
  </svg>
  <svg class="ucs" width="90" height="104" viewBox="0 -12 90 104"><path d="M10.500 21v55H64M5.500 70.500h10v10h-10z" fill="none" stroke="#c5c8cc" stroke-width="1.500"/><text x="11" y="16">Y</text><text x="68" y="75">X</text></svg>
  <div class="vlabel">[−][俯视][二维线框]</div>
  <div class="cube">
    <svg viewBox="0 0 110 140" width="110" height="140"><ellipse cx="60" cy="63" rx="38" ry="40" fill="none" stroke="#4a505a" stroke-width="8"/><path d="M43 44h36v38H43z" fill="#a9abae" stroke="#c0c2c4"/><path d="M49 50h24v26H49z" fill="#b3b5b7"/><path d="M60 54v15" stroke="#444" stroke-width="2.200"/><path d="M67 60h2M69 69h2" stroke="#555" stroke-width="2"/></svg>
    <span class="n">北</span><span class="s">南</span><span class="w">西</span><span class="e">东</span>
    <button class="wcs">WCS<b></b></button>
  </div>
  <svg class="navbar" viewBox="0 0 28 240" width="28" height="240"><path d="M28 0H4Q0 0 0 4v232q0 4 4 4h24z" fill="#5b6066"/><g fill="none" stroke="#43484f" stroke-width="1.500"><circle cx="17" cy="34" r="11"/><circle cx="17" cy="34" r="6"/><path d="M6 81q6 4 6 9 3 4 9 4 8-2 8-16M12 84V74M15 82V70M19 82V69M23 82V71M27 82v-8M8 103l16 16M22 103L8 118"/><path d="M16 146h4v9h8v6h-8v14h-4v-14h-5v4l-6-7 6-7v4h5z"/><circle cx="22" cy="117" r="6"/><path d="M26 121l4 5M7 192h5v6H7zM15 192h5v6h-5zM23 192h5v6h-5zM7 202h16v15H7z"/></g><path d="M12 205l7 4-7 5zM15 55h6l-3 4zM15 135h6l-3 4zM15 178h6l-3 4z" fill="#3c4148"/><circle cx="8" cy="103" r="2" fill="#43484f"/><circle cx="22" cy="103" r="2" fill="#43484f"/><circle cx="8" cy="119" r="2" fill="#43484f"/><circle cx="28" cy="6" r="3" fill="#45494f"/><circle cx="28" cy="234" r="3" fill="#45494f"/></svg>
  <div class="dyn">
    <label for="factor">指定比例因子或<b>⬇</b></label>
    <input id="factor" type="text" value="0.0000">
  </div>
  <aside class="tip"><p>小提示：</p><p class="in">选择缩放基点-</p><p class="in">在对话框输入R</p></aside>
  <div class="hist">指定基点:</div>
  <div class="cmd">
    <div class="grip"><svg viewBox="0 0 8 22" width="8" height="22"><path d="M1 0v22M4 0v22M7 0v22" stroke="#aaa" stroke-width="1.500" stroke-dasharray="2 1.500"/></svg><button aria-label="关闭">✕</button><button aria-label="自定义"><svg class="i"><use href="#wrench"/></svg></button></div>
    <svg class="i sc"><use href="#scale"/></svg><i class="tri s gray"></i>
    <p><strong>SCALE</strong><span class="zh">指定比例因子或</span><span class="opts">[<button><span class="zh">复制</span>(<em>C</em>)</button><button><span class="zh">参照</span>(<em>R</em>)</button>]:</span></p>
  </div>
</section>

<nav class="ltabs"><a class="on" href="#">模型</a><a href="#">布局1</a><a href="#">布局2</a><button aria-label="新建布局">+</button></nav>

<footer class="status">
  <div class="g coord">2730.5157, 1705.5428, 0.0000</div>
  <div class="g"><button class="mdl">模型</button></div>
  <div class="g dbl"><button aria-label="栅格"><svg class="i"><use href="#sgrid"/></svg></button><button aria-label="捕捉"><svg class="i"><use href="#sdots"/></svg></button><i class="tri"></i></div>
  <div class="g"><button aria-label="推断约束"><svg class="i"><use href="#sinfer"/></svg></button></div>
  <div class="g"><button aria-label="动态输入"><svg class="i"><use href="#sdyn"/></svg></button></div>
  <div class="g"><button aria-label="正交"><svg class="i"><use href="#sortho"/></svg></button><button aria-label="极轴"><svg class="i"><use href="#spolar"/></svg></button><i class="tri"></i><button aria-label="等轴测"><svg class="i"><use href="#siso"/></svg></button><i class="tri"></i></div>
  <div class="g"><button aria-label="对象追踪"><svg class="i"><use href="#strack"/></svg></button><button aria-label="对象捕捉"><svg class="i"><use href="#sosnap"/></svg></button><i class="tri"></i></div>
  <div class="g"><button aria-label="线宽"><svg class="i"><use href="#slw"/></svg></button></div>
  <div class="g"><button aria-label="透明度"><svg class="i"><use href="#strans"/></svg></button></div>
  <div class="g"><button aria-label="选择循环"><svg class="i"><use href="#scyc"/></svg></button></div>
  <div class="g"><button aria-label="三维捕捉"><svg class="i"><use href="#s3dg"/></svg></button><i class="tri"></i></div>
  <div class="g dbl"><button aria-label="动态 UCS"><svg class="i"><use href="#sducs"/></svg></button><button aria-label="选择过滤"><svg class="i"><use href="#s3d"/></svg></button><i class="tri"></i><button aria-label="小控件"><svg class="i"><use href="#sgiz"/></svg></button><i class="tri"></i></div>
  <div class="g"><button class="w30" aria-label="注释可见性"><svg class="i"><use href="#sann1"/></svg></button><button aria-label="自动缩放"><svg class="i"><use href="#sann2"/></svg></button><button class="ratio"><svg class="i"><use href="#sann3"/></svg><span>1:1 / 100%</span></button><i class="tri"></i></div>
  <div class="g"><button class="gr w30" aria-label="切换工作空间"><svg class="i"><use href="#gear"/></svg></button><i class="tri"></i></div>
  <div class="g"><button aria-label="注释监视器"><svg class="i"><use href="#splus"/></svg></button></div>
  <div class="g unit"><svg class="i"><use href="#sunit"/></svg><select aria-label="单位"><option>小数</option></select><i class="tri"></i></div>
  <div class="g"><button aria-label="快捷特性"><svg class="i"><use href="#squick"/></svg></button></div>
  <div class="g"><button aria-label="锁定界面"><svg class="i"><use href="#slock"/></svg></button><i class="tri"></i></div>
  <div class="g"><button aria-label="隔离对象"><svg class="i"><use href="#siso2"/></svg></button></div>
  <div class="g dbl"><button class="w30" aria-label="硬件加速"><svg class="i"><use href="#shw"/></svg></button></div>
  <div class="g last"><button aria-label="全屏显示"><svg class="i"><use href="#sclean"/></svg></button><button aria-label="自定义"><svg class="i"><use href="#smenu"/></svg></button></div>
</footer>

<div class="brand"><span class="cj">秒</span><span>d</span><svg viewBox="0 0 26 40" width="24" height="40"><circle cx="13" cy="26" r="12" fill="#2f7fe8" stroke="#333" stroke-width="1"/><path d="M9 19l12 7-12 7z" fill="#fff"/><path d="M9 3l5 5 8-5-8 9z" fill="#f6dc28"/></svg><span>ng</span><span class="cj">视频</span></div>

<div class="mark">
  <svg viewBox="0 0 48 52" width="48" height="52"><g fill="none" stroke="#d0d2d8" stroke-width="4" stroke-linecap="round" stroke-linejoin="round"><path d="M11 37V7q0-5 5-3l24 13q8 6 1 13L20 44Q3 52 3 38V10"/><path d="M11 37q0 4 5 2" stroke-width="3"/></g><path d="M19 18l9 6-9 6z" fill="#d0d2d8"/><path d="M31 19v10" stroke="#d0d2d8" stroke-width="1.600"/></svg>
  <div><strong>溜溜自学</strong><span>zixue.3D66.COM</span></div>
</div>
</body>
</html>
```
FILE: styles.css
```css
* { box-sizing: border-box; }
html, body { height: 100%; }
body {
  margin: 0;
  display: flex;
  flex-direction: column;
  overflow: hidden;
  position: relative;
  background: #383838;
  color: #e8e8e8;
  font: 13px/19px "Noto Sans", "Noto Sans CJK SC", sans-serif;
}
.defs { position: absolute; width: 0; height: 0; }
button, select, input { font: inherit; color: inherit; background: none; border: 0; padding: 0; margin: 0; border-radius: 0; }
select { appearance: none; outline: 0; }
button { display: flex; align-items: center; justify-content: center; flex: none; }
a { color: inherit; text-decoration: none; white-space: nowrap; }
h1, h2 { margin: 0; font-size: inherit; font-weight: normal; }
p { margin: 0; }
.i { width: 20px; height: 20px; flex: none; }
.tri { flex: none; width: 0; height: 0; border: 5px solid transparent; border-top-color: #f2f2f2; border-bottom: 0; }
.tri.s { border-width: 3px; border-bottom: 0; }
.tri.dark { border-width: 4px; border-top-color: #222; border-bottom: 0; }
.tri.gray { border-top-color: #999; }

.top { position: relative; flex: none; background: #444; }
.app {
  position: absolute; left: 0; top: 0; width: 40px; height: 46px;
  padding-bottom: 10px;
  background: linear-gradient(#cfcfcf, #858585);
  border: 1px solid #2b2b2b; border-left: 0;
}
.titlebar { display: flex; height: 28px; background: linear-gradient(#6e6e6e, #8f8f8f); border-bottom: 1px solid #4c4c4c; }
.quick { display: flex; width: 252px; padding-left: 48px; gap: 6px; align-items: center; }
.quick .tri { margin-left: 5px; }
.quick button:nth-child(n+6) { margin-right: 2px; }
.workspace { display: flex; align-items: center; width: 194px; padding: 0 3px; background: #575757; border: 1px solid #3c3c3c; color: #f0f0f0; }
.workspace .i { width: 18px; height: 18px; }
.workspace .tri, .combo .tri { border-width: 4px; border-top-width: 5px; border-bottom: 0; }
.workspace select { flex: 1; padding-left: 2px; color: #404040; }
.qmore { flex-direction: column; gap: 2px; width: 18px; background: #909090; border: 1px solid #777; }
.qmore b { width: 10px; height: 2px; background: #eee; }
.title { flex: 1; display: flex; gap: 20px; padding-left: 66px; background: #ededed; color: #111; font-weight: bold; white-space: nowrap; overflow: hidden; font-family: "Open Sans", "Noto Sans", sans-serif; font-size: 12px; }
.info { display: flex; align-items: stretch; width: 472px; }
.info > button { padding: 0 4px; }
.info > .sarrow { width: 14px; padding: 0; background: #999; border: 1px solid #777; }
.right { border: 4px solid transparent; border-left: 5px solid #fff; border-right: 0; }
.search { width: 193px; padding: 0 4px; background: #5e5e5e; border: 1px solid #3a3a3a; font-style: italic; font-size: 12px; }
.search::placeholder { color: #b5b5b5; opacity: 1; }
.info > .login { flex: 1; justify-content: flex-start; gap: 3px; padding: 0 8px 0 2px; }
.login .tri { margin-left: auto; }
.info > .a360 { gap: 4px; padding: 0 8px 0 2px; }
.info > .hlp { gap: 6px; padding: 0 0 0 10px; margin-right: 2px; }
.wctl { width: 108px; background: #ededed; }
.wctl svg { display: block; width: 108px; height: 26px; }
.menubar { display: flex; align-items: center; gap: 27px; height: 24px; padding-left: 54px; background: linear-gradient(#9c9c9c, #5c5c5c); border-bottom: 1px solid #3a3a3a; color: #f2f2f2; }
.mdi { width: 44px; height: 16px; margin-left: auto; }

.rtabs { display: flex; align-items: center; flex: none; height: 24px; background: #525252; border-bottom: 1px solid #3e3e3e; color: #d2d2d2; }
.rtabs .on { width: 42px; padding-left: 9px; line-height: 23px; color: #f2f2f2; background: #606060; }
.more { display: flex; gap: 21px; margin-left: 222px; }
.rmin { margin-left: 39px; gap: 6px; }
.rmin b { width: 15px; height: 10px; border: 3px solid #eee; border-width: 3px 5px; border-radius: 2px; background: #444; }

.ribbon { display: flex; flex: none; height: 111px; background: linear-gradient(#4e4e4e, #333); border-bottom: 1px solid #6a6a6a; }
.panel { display: flex; flex-direction: column; flex: none; background: #5a5a5a; border-right: 1px solid #454545; box-shadow: inset 1px 0 #666; }
.panel .body { display: flex; height: 89px; padding-top: 4px; }
.panel h2 { display: flex; align-items: center; justify-content: center; gap: 7px; height: 21px; background: linear-gradient(#4a4a4a, #545454); color: #f2f2f2; }
.la { width: 9px; height: 9px; }
.panel.p2 h2, .panel.p7 h2 { position: relative; padding-right: 14px; }
.p2 .la, .p7 .la { position: absolute; right: 3px; top: 7px; }
.big { flex-direction: column; justify-content: flex-start; width: 56px; padding-top: 3px; color: #f0f0f0; white-space: nowrap; }
.big > svg { width: 34px; height: 36px; flex: none; }
.big > span { margin-top: 4px; }
.big > .tri { margin-top: 3px; }
.col { display: flex; flex-direction: column; }
.col button, .icons button { height: 27px; }
.icons.body { display: grid; grid-auto-rows: 27px; align-items: center; justify-items: center; justify-content: start; }
.p1 { width: 142px; } .p1 .body { padding-left: 3px; }
.p2 { width: 72px; } .p2 .big { width: 44px; }
.p3 { width: 103px; } .p3 .icons { grid-template-columns: 28px 28px 27px 10px; padding-left: 3px; }
.p4 { width: 100px; } .p4 .icons { grid-template-columns: 28px 24px 34px 6px; padding-left: 2px; }
.p5 { width: 157px; } .p5 .icons { grid-template-columns: 28px 28px 26px 32px 24px 12px; padding-left: 2px; }
.p6 { width: 65px; } .p6 .big { width: 64px; } .p6 h2 { gap: 6px; }
.p7 { width: 155px; } .p7 .icons { grid-template-columns: 24px 8px 8px 27px 29px 26px 26px; padding-left: 5px; }
.c4 { grid-column: 4; }
.c4w { grid-column: 4 / 8; width: 107px; }
.combo { display: flex; align-items: center; height: 24px; padding: 0 3px 0 2px; background: linear-gradient(#5c5c5c, #6a6a6a); border: 1px solid #3c3c3c; color: #f4f4f4; }
.combo select { flex: 1; min-width: 0; padding-left: 1px; overflow: hidden; }
.combo .i { width: 18px; height: 18px; }
.p8 { width: 113px; } .panel.p8 .body { flex-direction: column; gap: 4px; padding: 5px 3px 0; }
.vc { align-self: flex-start; padding: 2px 3px; gap: 3px; }
.p9 { width: 184px; } .p9 .body { padding-left: 3px; }
.p9 .big { width: 76px; }
.p9 .sel { width: 40px; height: 81px; background: linear-gradient(#7d9fd6, #4d6da3); border: 1px solid #2e4468; padding-top: 2px; }
.p9 .giz { position: relative; width: 62px; }
.giz .tri { position: absolute; right: 3px; top: 58px; }
.raised { align-items: center; justify-content: space-between; padding-bottom: 6px; background: linear-gradient(#5c5c5c, #6c6c6c); border: 1px solid #333; box-shadow: none; }
.p10 { width: 65px; margin-right: 1px; }
.p11 { width: 64px; }
.p11 .i { width: 20px; height: 20px; }
.p12 { width: 65px; } .p12 .big { width: 64px; } .p12 h2 { gap: 6px; }

.ftabs { display: flex; flex: none; align-items: flex-end; height: 33px; padding-left: 16px; background: #383838; border-bottom: 4px solid #5a5a5a; }
.ftab { width: 138px; height: 26px; padding-left: 14px; line-height: 26px; background: linear-gradient(#626262, #484848); color: #d8d8d8; clip-path: polygon(0 100%, 7px 3px, 11px 0, 127px 0, 131px 3px, 138px 100%); }
.ftab.on { display: flex; margin-left: -4px; padding-left: 12px; background: linear-gradient(#7c7c7c, #5c5c5c); color: #f0f0f0; }
.ftab b { margin-left: auto; padding-right: 18px; font-size: 11px; color: #383838; }
.fplus { width: 24px; height: 18px; margin: 0 0 3px 3px; border-radius: 4px 4px 8px 4px; background: #5a5a5a; font-weight: bold; font-size: 16px; color: #c8c8c8; }

.canvas { position: relative; flex: 1; min-height: 0; overflow: hidden; background: #202730; }
.grid { display: block; position: absolute; inset: 0; }
.ucs { position: absolute; left: 0; bottom: 0; }
.ucs text { font: 22px "Lato", sans-serif; fill: #c5c8cc; }
.vlabel { position: absolute; left: 0; top: 6px; color: #dcdfe3; }
.cube { position: absolute; right: 0; top: 0; width: 110px; height: 150px; color: #a8abb0; font-size: 14px; }
.cube span { position: absolute; }
.cube .n { left: 53px; top: 12px; } .cube .s { left: 53px; top: 96px; }
.cube .w { left: 14px; top: 54px; } .cube .e { left: 93px; top: 54px; }
.wcs { position: absolute; left: 35px; top: 128px; width: 51px; height: 19px; gap: 6px; background: #8b9099; border: 1px solid #a3a7ae; border-radius: 4px; color: #4c5158; font-size: 12px; }
.wcs b { width: 9px; height: 4px; border: 1px solid #767b83; }
.navbar { position: absolute; right: 0; top: 177px; }
.dyn { position: absolute; left: 616px; top: 239px; display: flex; align-items: flex-start; gap: 6px; }
.dyn label { display: flex; width: 131px; height: 26px; padding: 1px 3px; background: #8b8b8b; border: 1px solid #c0c0c0; color: #161616; white-space: nowrap; }
.dyn label b { width: 12px; height: 13px; margin: 7px 0 0 auto; background: #f4f4ff; border: 1px solid #26266a; border-width: 1px 2px 2px 1px; font-size: 8px; line-height: 10px; text-align: center; }
.dyn input { width: 54px; height: 23px; padding-left: 3px; background: #fff linear-gradient(#3592fb, #3592fb) 3px 1px / 41px 19px no-repeat; color: #fff; border: 1px solid #fff; }
.tip { position: absolute; left: 174px; top: 324px; width: 304px; height: 152px; padding: 14px 0 0 57px; background: #84bffd; border: 1px solid #9fcbf8; color: #fff; font: bold 23px/40px "Noto Sans CJK SC", sans-serif; white-space: nowrap; }
.tip .in { padding-left: 22px; }
.hist { position: absolute; left: 350px; bottom: 34px; padding: 0 2px; line-height: 17px; background: #565a5f; color: #d8d8d8; font-family: "Liberation Mono", "Noto Sans CJK SC", monospace; font-size: 14px; }
.cmd { position: absolute; left: 286px; bottom: 1px; width: 860px; height: 29px; display: flex; align-items: center; background: #fff; color: #111; white-space: nowrap; border-top: 1px solid #999; }
.grip { display: flex; align-items: center; align-self: stretch; width: 58px; padding: 0 3px; gap: 6px; background: linear-gradient(#7c7c7c, #464646); color: #eee; font-weight: bold; }
.grip .i { width: 16px; height: 16px; }
.sc { margin: 0 1px 0 3px; }
.cmd p { display: flex; align-items: center; gap: 5px; margin-left: 8px; font-family: "Liberation Mono", "Noto Sans CJK SC", monospace; font-size: 13px; }
.zh { font-size: 14px; }
.opts { display: flex; align-items: center; gap: 3px; margin-left: 3px; }
.cmd p button { padding: 0 1px; border-radius: 3px; background: #d6d6d6; }
.cmd em { font-style: normal; font-weight: bold; color: #3a2fd0; }

.ltabs { display: flex; flex: none; height: 24px; padding-left: 6px; background: #383838; color: #d0d0d0; }
.ltabs a, .ltabs button { height: 21px; width: 58px; line-height: 21px; text-align: center; background: #545454; clip-path: polygon(0 0, 100% 0, 50px 90%, 46px 100%, 12px 100%, 8px 90%); }
.ltabs a.on { width: 54px; background: #747474; color: #fff; font-weight: bold; clip-path: polygon(0 0, 100% 0, 48px 90%, 44px 100%, 12px 100%, 8px 90%); }
.ltabs button { width: 28px; clip-path: polygon(4px 0, 100% 0, 22px 100%, 2px 100%); font-weight: bold; font-size: 16px; }

.status { display: flex; flex: none; height: 22px; margin-left: 150px; overflow: hidden; background: #4a4a4a; border-top: 1px solid #707070; }
.g { display: flex; align-items: center; flex: none; height: 27px; border-right: 1px solid #777; }
.g.dbl { border-right: 3px double #777; }
.g button { width: 26px; }
.g .w30 { width: 30px; }
.g .i { width: 18px; height: 18px; }
.g .tri { margin: 0 4px; border-width: 4px; border-bottom: 0; border-top-width: 5px; }
.coord { width: 194px; padding-left: 14px; color: #a9a9a9; border-left: 1px solid #777; white-space: nowrap; font-size: 12px; }
.g .mdl { width: 33px; font-weight: bold; color: #fff; }
.g .ratio { width: 84px; gap: 6px; justify-content: space-between; padding-left: 3px; white-space: nowrap; font-size: 12px; }
.gr { color: #bbb; }
.unit { width: 106px; padding-left: 5px; }
.unit select { flex: 1; padding-left: 10px; font-weight: bold; color: #fff; }
.last { border: 0; }

.brand { position: absolute; left: 41px; top: 40px; display: flex; align-items: center; height: 48px; color: #fff; font: bold 42px/48px "Lato", sans-serif; -webkit-text-stroke: 5px #303030; paint-order: stroke fill; white-space: nowrap; }
.brand .cj { font: italic bold 38px/48px "Noto Sans CJK SC", sans-serif; }
.mark { position: absolute; right: 79px; bottom: 20px; width: 235px; height: 115px; display: flex; align-items: center; gap: 17px; padding-left: 13px; background: #222f56; color: #d0d2d8; }
.mark div { display: flex; flex-direction: column; }
.mark strong { font: bold 36px/36px "Noto Sans CJK SC", sans-serif; }
.mark span { font: 17px/20px "DejaVu Sans", sans-serif; }
```
